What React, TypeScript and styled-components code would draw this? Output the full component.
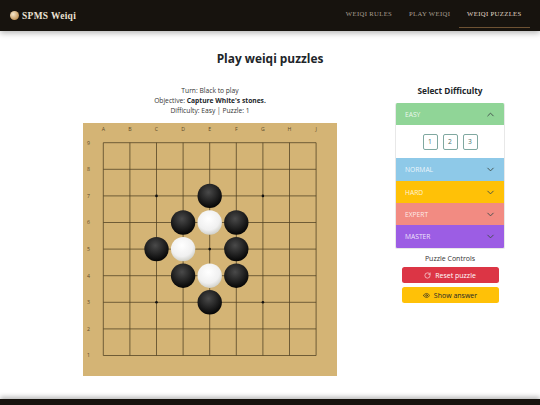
import React from "react";
import styled, { createGlobalStyle } from "styled-components";
import { ChevronUp, ChevronDown, RotateCw, Eye } from "lucide-react";

const Global = createGlobalStyle`
  html, body { margin: 0; padding: 0; background: #fff; }
  body { font-family: "Open Sans", sans-serif; color: #212529; }
  #root { width: 540px; height: 405px; overflow: hidden; }
`;
const Page = styled.div`
  width: 540px; height: 405px; display: flex; flex-direction: column; overflow: hidden;
`;
const Header = styled.header`
  height: 31px; flex: none; background: #17130e; box-shadow: 0 2px 6px rgba(0,0,0,.3);
  display: flex; align-items: center; justify-content: space-between; padding: 0 10px;
`;
const Brand = styled.div`
  display: flex; align-items: center; gap: 3px;
  font: bold 9.4px "Liberation Serif", serif; color: #ece3d4; letter-spacing: .35px;
`;
const BrandStone = styled.span`
  width: 9px; height: 9px; border-radius: 50%;
  background: radial-gradient(circle at 35% 35%, #f6e7cc, #c89d63 65%, #8a6636);
`;
const Nav = styled.nav`
  display: flex; height: 100%; align-items: stretch;
`;
const NavItem = styled.a<{ $active?: boolean }>`
  font: 6.7px "Liberation Serif", serif; letter-spacing: .35px; padding: 0 8.4px; display: flex; align-items: center;
  height: 28px; box-sizing: border-box;
  color: ${p => p.$active ? "#e3dac9" : "#a89f90"};
  border-bottom: 1.5px solid ${p => p.$active ? "#6e5233" : "transparent"};
`;
const Main = styled.main`
  flex: 1; min-height: 0; display: flex; flex-direction: column; align-items: stretch;
`;
const Title = styled.h1`
  margin: 19px 0 0; height: 17px; text-align: center; font: bold 11.9px/17px "Open Sans", sans-serif; color: #212529;
`;
const Content = styled.div`
  display: flex; align-items: flex-start; margin-top: 18px; padding-left: 83px;
`;
const BoardColumn = styled.section`
  width: 254px; display: flex; flex-direction: column; align-items: center;
`;
const Status = styled.div`
  text-align: center; font-size: 6.7px; line-height: 10px; color: #333; height: 37px; padding-top: 1px;
  b { color: #212529; }
`;
const Board = styled.svg`
  display: block; width: 254px; height: 253px; flex: none;
`;
const Side = styled.aside`
  width: 110px; margin-left: 58px; display: flex; flex-direction: column; align-items: stretch;
`;
const SideTitle = styled.h2`
  margin: 0 0 6px; text-align: center; font: bold 8.3px/12px "Open Sans", sans-serif; color: #212529;
`;
const Accordion = styled.div`
  border-radius: 2px; overflow: hidden; border: 0.5px solid #e8e8e8; border-top: none;
`;
const Row = styled.div<{ $bg: string; $h: number }>`
  height: ${p => p.$h}px; background: ${p => p.$bg}; display: flex; align-items: center; justify-content: space-between;
  padding: 0 8px 0 9px; color: rgba(255,255,255,.85); font-size: 6.7px;
  svg { color: #3f4d49; }
`;
const Panel = styled.div`
  height: 33px; background: #fff; display: flex; align-items: center; justify-content: center; gap: 5px;
`;
const PuzzleButton = styled.button`
  width: 15px; height: 16px; padding: 0; background: #fff; border: 0.7px solid #7fa8a0; border-radius: 2px;
  font: 6.7px "Open Sans", sans-serif; color: #44706a;
`;
const ControlsTitle = styled.div`
  margin-top: 5px; text-align: center; font-size: 7px; line-height: 10px; color: #333;
`;
const Controls = styled.div`
  margin: 3px 6.5px 0 6.5px; display: flex; flex-direction: column; gap: 4px;
`;
const ControlButton = styled.button<{ $bg: string; $fg: string }>`
  height: 16px; border: none; border-radius: 2.5px; background: ${p => p.$bg}; color: ${p => p.$fg};
  font: 7px "Open Sans", sans-serif; padding: 0; display: flex; align-items: center; justify-content: center; gap: 4px;
`;
const Footer = styled.footer`
  height: 6px; flex: none; background: #17130e; box-shadow: 0 -2px 5px rgba(0,0,0,.3);
`;

const O = 20.3, S = 26.6;
const letters = ["A", "B", "C", "D", "E", "F", "G", "H", "J"];
const black: [number, number][] = [[4, 2], [3, 3], [5, 3], [2, 4], [5, 4], [3, 5], [5, 5], [4, 6]];
const white: [number, number][] = [[4, 3], [3, 4], [4, 5]];
const stars: [number, number][] = [[2, 2], [6, 2], [4, 4], [2, 6], [6, 6]];

const Goban = () => (
  <Board viewBox="0 0 254 253">
    <defs>
      <radialGradient id="bs" cx="45%" cy="35%" r="65%">
        <stop offset="0%" stopColor="#4a4a4a" />
        <stop offset="55%" stopColor="#242424" />
        <stop offset="100%" stopColor="#050505" />
      </radialGradient>
      <radialGradient id="ws" cx="45%" cy="35%" r="70%">
        <stop offset="0%" stopColor="#ffffff" />
        <stop offset="65%" stopColor="#f0f0f0" />
        <stop offset="100%" stopColor="#c9c9c0" />
      </radialGradient>
    </defs>
    <rect width="254" height="253" fill="#d4b475" />
    {letters.map((l, i) => (
      <text key={l} x={O + i * S} y={7.5} textAnchor="middle" fontSize="5.2" fontFamily="Open Sans, sans-serif" fill="#5c4a2a">{l}</text>
    ))}
    {letters.map((_, i) => (
      <text key={i} x={5.5} y={21.5 + i * S} textAnchor="middle" fontSize="5.2" fontFamily="Open Sans, sans-serif" fill="#5c4a2a">{9 - i}</text>
    ))}
    {letters.map((_, i) => (
      <React.Fragment key={i}>
        <line x1={O + i * S} x2={O + i * S} y1={19.7} y2={232.5} stroke="#4e3f22" strokeWidth="0.75" />
        <line x1={O} x2={O + 8 * S} y1={19.7 + i * S} y2={19.7 + i * S} stroke="#4e3f22" strokeWidth="0.75" />
      </React.Fragment>
    ))}
    {stars.map(([x, y]) => (
      <circle key={`${x}-${y}`} cx={O + x * S} cy={19.7 + y * S} r="1.3" fill="#111" />
    ))}
    {black.map(([x, y]) => (
      <circle key={`b${x}-${y}`} cx={O + x * S} cy={19.7 + y * S} r="12.2" fill="url(#bs)" />
    ))}
    {white.map(([x, y]) => (
      <circle key={`w${x}-${y}`} cx={O + x * S} cy={19.7 + y * S} r="12.2" fill="url(#ws)" />
    ))}
  </Board>
);

const levels = [
  { name: "NORMAL", bg: "#8ec9e8", h: 23 },
  { name: "HARD", bg: "#ffc107", h: 22 },
  { name: "EXPERT", bg: "#f28b82", h: 22 },
  { name: "MASTER", bg: "#9c5de4", h: 23 },
];

export default function App() {
  return (
    <Page>
      <Global />
      <Header>
        <Brand><BrandStone />SPMS Weiqi</Brand>
        <Nav>
          <NavItem>WEIQI RULES</NavItem>
          <NavItem>PLAY WEIQI</NavItem>
          <NavItem $active>WEIQI PUZZLES</NavItem>
        </Nav>
      </Header>
      <Main>
        <Title>Play weiqi puzzles</Title>
        <Content>
          <BoardColumn>
            <Status>
              <div>Turn: Black to play</div>
              <div>Objective: <b>Capture White's stones.</b></div>
              <div>Difficulty: Easy | Puzzle: 1</div>
            </Status>
            <Goban />
          </BoardColumn>
          <Side>
            <SideTitle>Select Difficulty</SideTitle>
            <Accordion>
              <Row $bg="#90d597" $h={22}>EASY<ChevronUp size={11} /></Row>
              <Panel>
                <PuzzleButton>1</PuzzleButton>
                <PuzzleButton>2</PuzzleButton>
                <PuzzleButton>3</PuzzleButton>
              </Panel>
              {levels.map(l => (
                <Row key={l.name} $bg={l.bg} $h={l.h}>{l.name}<ChevronDown size={11} /></Row>
              ))}
            </Accordion>
            <ControlsTitle>Puzzle Controls</ControlsTitle>
            <Controls>
              <ControlButton $bg="#dc3545" $fg="#fff"><RotateCw size={7} />Reset puzzle</ControlButton>
              <ControlButton $bg="#ffc107" $fg="#212529"><Eye size={7} />Show answer</ControlButton>
            </Controls>
          </Side>
        </Content>
      </Main>
      <Footer />
    </Page>
  );
}
